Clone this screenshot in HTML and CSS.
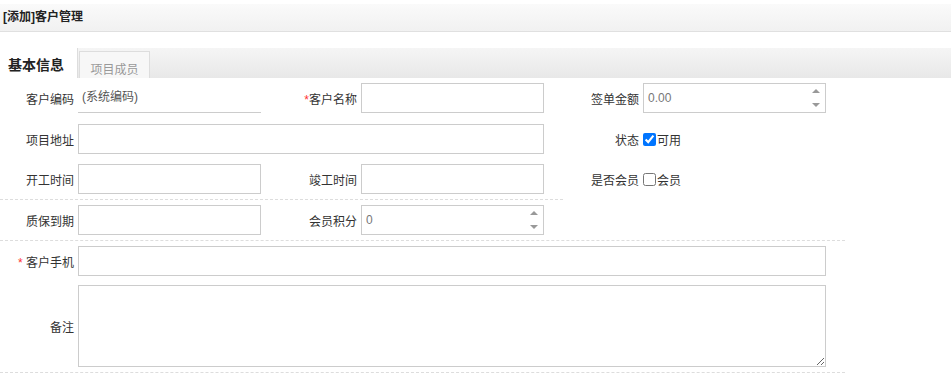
FILE: index.html
```html
<!DOCTYPE html>
<html lang="zh-CN">
<head>
    <meta charset="UTF-8">
    <title>[添加]客户管理</title>
    <link rel="stylesheet" href="styles.css">
</head>
<body>
    <div class="page-head">[添加]客户管理</div>

    <div class="tabs">
        <span class="tab active">基本信息</span>
        <span class="tab">项目成员</span>
    </div>

    <div class="form">
        <div class="row r1">
            <label class="lbl">客户编码</label>
            <div class="static">(系统编码)</div>
            <label class="lbl"><i class="req">*</i>客户名称</label>
            <input class="txt" type="text">
            <label class="lbl">签单金额</label>
            <div class="num">
                <input class="txt" type="text" value="0.00">
                <span class="spin"><b class="up"></b><b class="down"></b></span>
            </div>
        </div>

        <div class="row r2">
            <label class="lbl">项目地址</label>
            <input class="txt span3" type="text">
            <label class="lbl">状态</label>
            <label class="chk"><input type="checkbox" checked>可用</label>
        </div>

        <div class="row r3">
            <label class="lbl">开工时间</label>
            <input class="txt" type="text">
            <label class="lbl">竣工时间</label>
            <input class="txt" type="text">
            <label class="lbl">是否会员</label>
            <label class="chk"><input type="checkbox">会员</label>
        </div>
        <div class="sep short"></div>

        <div class="row r4">
            <label class="lbl">质保到期</label>
            <input class="txt" type="text">
            <label class="lbl">会员积分</label>
            <div class="num">
                <input class="txt" type="text" value="0">
                <span class="spin"><b class="up"></b><b class="down"></b></span>
            </div>
        </div>
        <div class="sep"></div>

        <div class="row r5">
            <label class="lbl"><i class="req">*</i> 客户手机</label>
            <input class="txt span5" type="text">
        </div>

        <div class="row r6">
            <label class="lbl">备注</label>
            <textarea class="txt span5"></textarea>
        </div>
        <div class="sep"></div>
    </div>
</body>
</html>
```

FILE: styles.css
```css
body {
    margin: 0;
    font-family: "Liberation Sans", "Noto Sans CJK SC", sans-serif;
    font-size: 12px;
    color: #333;
    background: #fff;
}
.page-head {
    margin-top: 4px;
    height: 28px;
    line-height: 26px;
    padding-left: 3px;
    font-weight: bold;
    color: #222;
    background: linear-gradient(#fafafa, #f1f1f1);
    border-bottom: 1px solid #e0e0e0;
    box-sizing: border-box;
}
.tabs {
    margin-top: 16px;
    height: 30px;
    display: flex;
    align-items: flex-end;
    background: linear-gradient(#f5f5f5, #e8e8e8);
}
.tab {
    height: 27px;
    line-height: 36px;
    width: 71px;
    text-align: center;
    margin-left: 1px;
    color: #999;
    background: #f7f7f7;
    border: 1px solid #ddd;
    border-bottom: none;
    box-sizing: border-box;
}
.tab.active {
    height: 30px;
    width: 78px;
    margin-left: 0;
    padding: 0 0 0 8px;
    text-align: left;
    line-height: 35px;
    font-size: 14px;
    font-weight: bold;
    color: #222;
    background: #fff;
    border: none;
    border-right: 1px solid #ddd;
}
.form {
    width: 845px;
}
.row {
    display: grid;
    grid-template-columns: 78px 183px 100px 183px 99px 183px;
    height: 30px;
    align-items: center;
}
.r1 { margin-top: 5px; }
.r2 { margin-top: 11px; }
.r3 { margin-top: 10px; }
.r4 { margin-top: 5px; }
.r5 { margin-top: 5px; }
.r6 { margin-top: 9px; height: 82px; }
.lbl {
    text-align: right;
    padding-right: 4px;
    white-space: nowrap;
}
.req {
    font-style: normal;
    color: #f33;
}
.txt {
    width: 100%;
    height: 30px;
    margin: 0;
    padding: 0 4px;
    border: 1px solid #ccc;
    box-sizing: border-box;
    font: inherit;
    color: #777;
    outline: none;
}
textarea.txt {
    height: 82px;
    resize: both;
}
.span3 { grid-column: span 3; }
.span5 { grid-column: span 5; }
.static {
    height: 30px;
    line-height: 29px;
    padding-left: 4px;
    color: #555;
    border-bottom: 1px solid #ccc;
    box-sizing: border-box;
}
.num {
    position: relative;
    height: 30px;
}
.spin {
    position: absolute;
    right: 6px;
    top: 6px;
    width: 8px;
    height: 18px;
}
.spin b {
    position: absolute;
    left: 0;
    width: 0;
    height: 0;
    border-left: 4px solid transparent;
    border-right: 4px solid transparent;
}
.spin .up {
    top: 0;
    border-bottom: 4px solid #999;
}
.spin .down {
    bottom: 0;
    border-top: 4px solid #999;
}
.chk {
    display: flex;
    align-items: center;
    color: #333;
}
.chk input {
    margin: 0 1px 0 0;
    width: 13px;
    height: 13px;
}
.sep {
    margin-top: 5px;
    border-top: 1px dashed #ddd;
}
.sep.short {
    width: 563px;
}
```
